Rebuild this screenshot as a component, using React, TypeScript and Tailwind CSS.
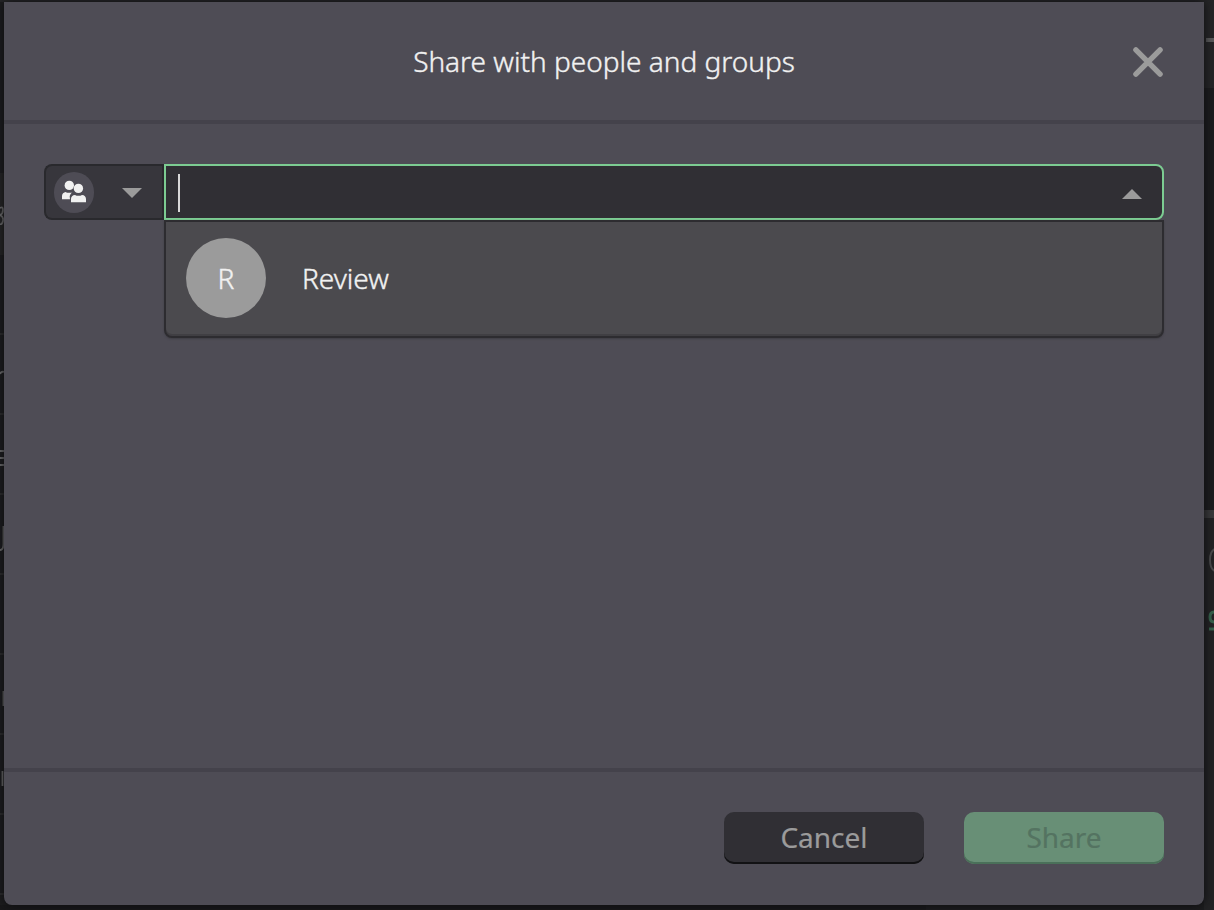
import { useState } from "react";

const PeopleIcon = () => (
  <svg width="40" height="41" viewBox="0 0 40 41" fill="#f1f1f1">
    <circle cx="15.3" cy="13.4" r="4.7" />
    <path d="M8 27.200v-3.200c0-2.300 1.600-3.800 3.800-4.100 1 1 5.400 1.300 6.500.4-1.100 1-2.300 2-2.600 4.200L16 27.200z" />
    <circle cx="24.4" cy="16.4" r="4.700" />
    <path d="M17 30.200v-3.200c0-2.400 1.500-4 4-4.100 1.800 1.200 5.200 1.200 7 0 2.500.1 4 1.700 4 4.100v3.200z" />
  </svg>
);

const CloseIcon = () => (
  <svg width="32" height="32" viewBox="0 0 32 32">
    <path
      d="M3.900 3.900L28.100 28.100M28.100 3.900L3.900 28.100"
      stroke="#9b9b9b"
      strokeWidth="5.4"
      strokeLinecap="round"
    />
  </svg>
);

const Triangle: React.FC<{ up?: boolean }> = ({ up }) => (
  <svg width="20" height="10" viewBox="0 0 20 10" fill="#9b9b9b">
    <path d={up ? "M0 10L10 0L20 10z" : "M0 0H20L10 10z"} />
  </svg>
);

const rowLines = [
  "top-[333px]",
  "top-[413px]",
  "top-[493px]",
  "top-[573px]",
  "top-[653px]",
  "top-[733px]",
  "top-[813px]",
  "top-[893px]",
];

// Dimmed page that peeks out around the dialog
const Backdrop = () => (
  <div className="absolute inset-0 overflow-hidden bg-[#1c1c1e]" aria-hidden>
    <div className="absolute inset-x-0 top-0 h-[2px] bg-[#262628]" />
    <div className="absolute top-[173px] left-0 h-[82px] w-1 bg-[#252526]" />
    {rowLines.map((top) => (
      <div key={top} className={`absolute left-0 h-[2px] w-1 bg-[#2c2c2d] ${top}`} />
    ))}
    <svg
      className="absolute top-0 left-0"
      width="4"
      height="910"
      fill="none"
      stroke="#707071"
      strokeWidth="1.8"
    >
      <path d="M0 208q3-2 3 2q0 4-3 5q4 2 3 6q-1 4-3 3" />
      <path d="M0 374q1-3 4-2M0 451h4M0 458h4M0 465h4" />
      <path d="M3.500 526v18q0 6-3.500 6M3.500 691v15M2.500 771v15" />
    </svg>
    <div className="absolute top-0 right-0 h-[88px] w-[10px] bg-[#252527]" />
    <div className="absolute top-[38px] right-0 h-1 w-2 bg-[#59595a]" />
    <div className="absolute top-[510px] right-0 h-[400px] w-[10px] bg-[#222224]" />
    <div className="absolute top-[510px] right-0 h-2 w-[10px] bg-[#38383a]" />
    <svg className="absolute top-[540px] right-0" width="7" height="100" fill="none">
      <path d="M8 9Q3 11 3 20T8 31" stroke="#4a4a4c" strokeWidth="2" />
      <path d="M7 72Q3 72 3 77T7 82M2 89H7" stroke="#36614c" strokeWidth="3" />
    </svg>
    <div className="absolute bottom-0 left-0 h-[5px] w-[926px] bg-[#18181a]" />
  </div>
);

const GroupPicker = () => {
  const [query, setQuery] = useState("");

  return (
    <div className="flex px-10 pt-10">
      <button className="flex h-14 w-[120px] items-center rounded-l-lg border-2 border-r-0 border-[#29292d] bg-[#37363c] pl-2">
        <span className="mt-px rounded-full bg-[#4e4c55]">
          <PeopleIcon />
        </span>
        <span className="mt-[2px] ml-7">
          <Triangle />
        </span>
        <span className="ml-auto h-full w-[2px] bg-[#29292d]" />
      </button>
      <div className="flex-1">
        <div className="flex h-14 items-center rounded-r-lg border-2 border-[#7ccc92] bg-[#302f34] pr-5 pl-3">
          <span className="mt-[2px] h-[38px] w-[2px] bg-[#d8d8d8]" />
          <input
            className="h-full flex-1 bg-transparent text-[28px] text-[#f1f1f1] outline-none"
            value={query}
            onChange={(e) => setQuery(e.target.value)}
          />
          <span className="mt-1">
            <Triangle up />
          </span>
        </div>
        <ul className="h-[118px] rounded-b-lg border-2 border-[#2d2c30] bg-[#4b4a4e] shadow-[inset_0_-2px_0_#403f43,0_1px_2px_#3f3e45]">
          <li className="flex items-center px-5 pt-4 text-[28px] font-light text-[#f1f1f1] [-webkit-text-stroke:0.4px_#f1f1f1]">
            <span className="flex size-20 items-center justify-center rounded-full bg-[#9b9b9b]">
              R
            </span>
            <span className="ml-9">Review</span>
          </li>
        </ul>
      </div>
    </div>
  );
};

export default function App() {
  return (
    <div className="relative h-[910px] w-[1214px] overflow-hidden pt-[2px] pl-1 font-['Noto_Sans',sans-serif]">
      <Backdrop />
      <section className="relative flex h-[903px] w-[1200px] flex-col rounded-b-lg bg-[#4e4c55] shadow-[0_0_10px_#0d0d0f]">
        <header className="flex h-[122px] items-center border-b-4 border-[#44424b] pr-10 pl-[72px]">
          <h1 className="flex-1 text-center text-[28px] font-light text-[#f1f1f1] [-webkit-text-stroke:0.4px_#f1f1f1]">
            Share with people and groups
          </h1>
          <button className="pt-[2px]">
            <CloseIcon />
          </button>
        </header>
        <div className="flex-1">
          <GroupPicker />
        </div>
        <footer className="flex h-[137px] justify-end gap-10 border-t-4 border-[#44424b] px-10 pt-10">
          <button className="h-[52px] w-[200px] rounded-[10px] bg-[#302f34] pb-[2px] text-[28px] text-[#9b9b9b] shadow-[inset_0_-2px_0_#121214] [-webkit-text-stroke:0.2px_#9b9b9b]">
            Cancel
          </button>
          <button className="h-[52px] w-[200px] rounded-[10px] bg-[#688f76] pb-[2px] text-[28px] text-[#547361] shadow-[inset_0_-2px_0_#4a7059] [-webkit-text-stroke:0.2px_#547361]">
            Share
          </button>
        </footer>
      </section>
    </div>
  );
}
